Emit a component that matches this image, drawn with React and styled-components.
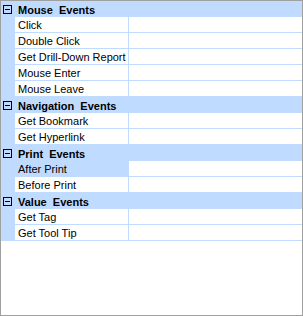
import React from "react";
import styled, { createGlobalStyle } from "styled-components";

const categories = [
  {
    name: "Mouse  Events",
    items: ["Click", "Double Click", "Get Drill-Down Report", "Mouse Enter", "Mouse Leave"]
  },
  {
    name: "Navigation  Events",
    items: ["Get Bookmark", "Get Hyperlink"]
  },
  {
    name: "Print  Events",
    items: ["After Print", "Before Print"]
  },
  {
    name: "Value  Events",
    items: ["Get Tag", "Get Tool Tip"]
  }
];

const selectedItem = "After Print";

const blue = "#bfdbff";

const GlobalStyle = createGlobalStyle`
  html, body {
    margin: 0;
    padding: 0;
    background: #ffffff;
  }
  body {
    font-family: "Liberation Sans", Arial, sans-serif;
    font-size: 11px;
  }
`;

const Panel = styled.div`
  box-sizing: border-box;
  width: 303px;
  height: 316px;
  border: 1px solid #a0a0a0;
  background: #ffffff;
  overflow: hidden;
  white-space: pre;
`;

const Category = styled.div`
  display: flex;
  flex-direction: column;
`;

const Header = styled.div`
  display: flex;
  align-items: center;
  height: 16px;
  background: ${blue};
`;

// the little boxed minus that collapses a category
const Toggle = styled.span`
  position: relative;
  box-sizing: border-box;
  width: 9px;
  height: 9px;
  margin-left: 2px;
  margin-right: 6px;
  border: 1px solid #000000;
  background: ${blue};

  &::after {
    content: "";
    position: absolute;
    left: 1px;
    right: 1px;
    top: 3px;
    height: 1px;
    background: #000000;
  }
`;

const Title = styled.span`
  font-weight: bold;
  color: #000000;
  line-height: 16px;
  padding-top: 1px;
`;

const Row = styled.div`
  display: flex;
  height: 16px;
`;

const Gutter = styled.div`
  width: 14px;
  flex: none;
  background: ${blue};
`;

const Name = styled.div`
  box-sizing: border-box;
  width: 114px;
  flex: none;
  padding: 1px 0 0 3px;
  line-height: 14px;
  color: #000000;
  border-right: 1px solid ${blue};
  border-bottom: 1px solid ${blue};
  background: ${p => (p.$selected ? blue : "#ffffff")};
  overflow: hidden;
`;

const Value = styled.div`
  flex: 1;
  border-bottom: 1px solid ${blue};
`;

const App = () => (
  <>
    <GlobalStyle />
    <Panel>
      {categories.map(cat => (
        <Category key={cat.name}>
          <Header>
            <Toggle />
            <Title>{cat.name}</Title>
          </Header>
          {cat.items.map(item => (
            <Row key={item}>
              <Gutter />
              <Name $selected={item === selectedItem}>{item}</Name>
              <Value />
            </Row>
          ))}
        </Category>
      ))}
    </Panel>
  </>
);

export default App;
